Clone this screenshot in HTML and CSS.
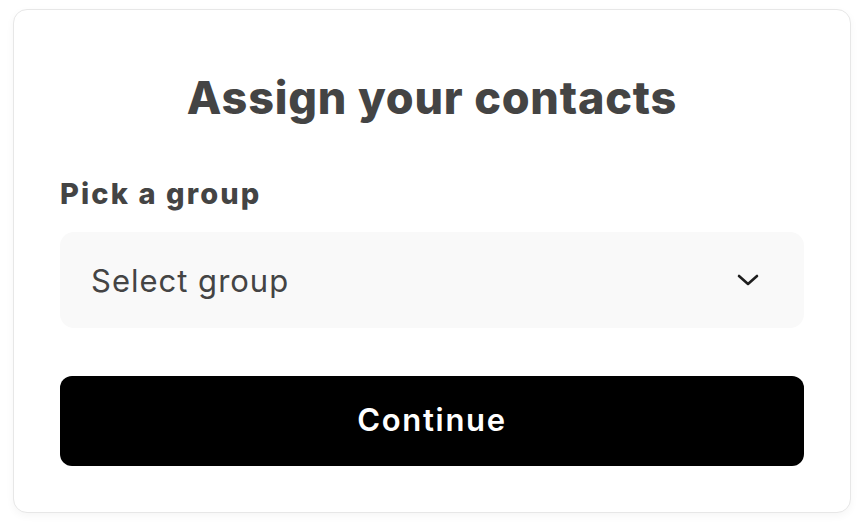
FILE: index.html
```html
<!DOCTYPE html>
<html lang="en">
<head>
    <meta charset="UTF-8">
    <title>Assign your contacts</title>
    <link rel="stylesheet" href="styles.css">
</head>
<body>
<div class="card">
    <h1>Assign your contacts</h1>

    <form class="assign-form">
        <label for="group" class="field-label">Pick a group</label>
        <div class="select-box" id="group">
            <span class="select-text">Select group</span>
            <svg class="chevron" width="24" height="24" viewBox="0 0 24 24" fill="none">
                <path d="M3 8l9 8 9-8" stroke="#1e1e1e" stroke-width="2.6" stroke-linecap="round" stroke-linejoin="round"/>
            </svg>
        </div>
        <button type="button" class="btn">Continue</button>
    </form>
</div>
</body>
</html>
```

FILE: styles.css
```css
* {
    box-sizing: border-box;
}

body {
    margin: 0;
    padding: 9px 13px;
    font-family: 'Inter', sans-serif;
    background-color: #fff;
}

.card {
    background-color: #fff;
    border: 1px solid #e7e7e7;
    border-radius: 14px;
    box-shadow: 0 3px 8px rgba(0, 0, 0, 0.04);
    padding: 61px 46px 46px;
    height: 504px;
}

h1 {
    margin: 0 0 53px;
    text-align: center;
    font-size: 45px;
    line-height: 54px;
    font-weight: 800;
    letter-spacing: 0.8px;
    color: #444;
}

.field-label {
    display: block;
    margin-bottom: 22px;
    font-size: 29px;
    line-height: 32px;
    font-weight: 800;
    letter-spacing: 2.1px;
    color: #444;
}

.select-box {
    display: flex;
    align-items: center;
    justify-content: space-between;
    height: 96px;
    padding: 0 44px 0 31px;
    background-color: #f9f9f9;
    border-radius: 14px;
}

.select-text {
    font-size: 31px;
    letter-spacing: 1px;
    color: #444;
}

.btn {
    display: block;
    width: 100%;
    height: 90px;
    margin-top: 48px;
    padding: 0 0 4px;
    background-color: #000;
    color: #fff;
    border: none;
    border-radius: 12px;
    font-family: inherit;
    font-size: 31px;
    font-weight: 600;
    letter-spacing: 1.7px;
    cursor: pointer;
}
```
